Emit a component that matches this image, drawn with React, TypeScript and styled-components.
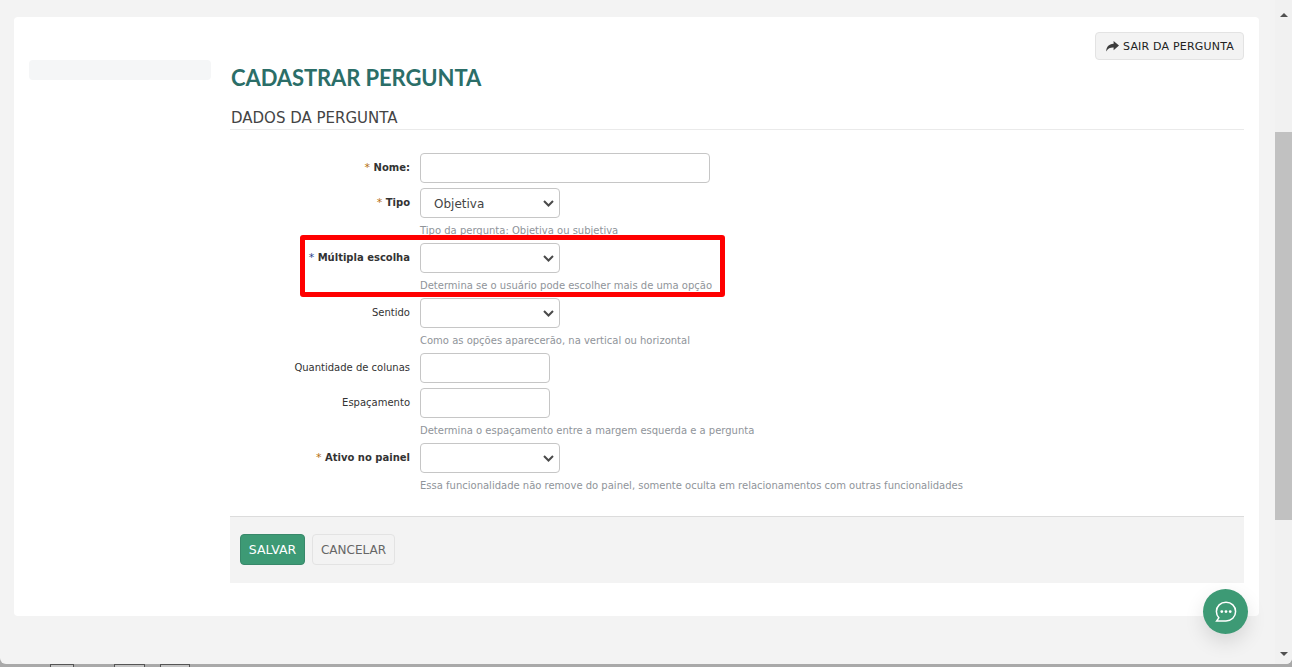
import React from 'react';
import styled, { createGlobalStyle } from 'styled-components';

const GlobalStyle = createGlobalStyle`
  html, body {
    margin: 0;
    height: 100%;
    overflow: hidden;
    background: #a9a9a9;
  }
  * {
    box-sizing: border-box;
  }
`;

type Field = {
  label: string;
  required?: 'orange' | 'blue';
  kind: 'text' | 'short' | 'select';
  value?: string;
  hint?: string;
};

const fields: Field[] = [
  { label: 'Nome:', required: 'orange', kind: 'text' },
  { label: 'Tipo', required: 'orange', kind: 'select', value: 'Objetiva', hint: 'Tipo da pergunta: Objetiva ou subjetiva' },
  { label: 'Múltipla escolha', required: 'blue', kind: 'select', hint: 'Determina se o usuário pode escolher mais de uma opção' },
  { label: 'Sentido', kind: 'select', hint: 'Como as opções aparecerão, na vertical ou horizontal' },
  { label: 'Quantidade de colunas', kind: 'short' },
  { label: 'Espaçamento', kind: 'short', hint: 'Determina o espaçamento entre a margem esquerda e a pergunta' },
  { label: 'Ativo no painel', required: 'orange', kind: 'select', hint: 'Essa funcionalidade não remove do painel, somente oculta em relacionamentos com outras funcionalidades' },
];

const tabs = [24, 31, 30];

const App: React.FC = () => {
  return (
    <Screen>
      <GlobalStyle />
      <Window>
        <Viewport>
          <Card>
            <Sidebar>
              <SidebarStub />
            </Sidebar>
            <Content>
              <TopBar>
                <ExitButton type="button">
                  <svg width="13" height="11" viewBox="0 0 13 11" fill="#3c3c3c">
                    <path d="M7.6 0 L13 4.6 L7.6 9.2 V6.4 C4.4 6.3 2 7 .3 10.4 C.2 6.2 2.6 3 7.6 2.8 Z" />
                  </svg>
                  SAIR DA PERGUNTA
                </ExitButton>
              </TopBar>
              <Title>CADASTRAR PERGUNTA</Title>
              <SectionTitle>DADOS DA PERGUNTA</SectionTitle>
              <Form>
                {fields.map((f) => (
                  <Row key={f.label} $hasHint={!!f.hint}>
                    <Label $bold={!!f.required}>
                      {f.required && <Star $color={f.required}>* </Star>}
                      {f.label}
                    </Label>
                    <Control>
                      {f.kind === 'select' ? (
                        <SelectBox>
                          {f.value}
                          <svg width="11" height="7" viewBox="0 0 11 7" fill="none" stroke="#4a4a4a" strokeWidth="2">
                            <path d="M1 1 L5.5 5.5 L10 1" />
                          </svg>
                        </SelectBox>
                      ) : (
                        <Input $wide={f.kind === 'text'} />
                      )}
                      {f.hint && <Hint>{f.hint}</Hint>}
                    </Control>
                  </Row>
                ))}
                <Highlight />
              </Form>
              <Footer>
                <SaveButton type="button">SALVAR</SaveButton>
                <CancelButton type="button">CANCELAR</CancelButton>
              </Footer>
            </Content>
          </Card>
          <ChatButton type="button">
            <svg width="22" height="22" viewBox="0 0 22 22" fill="none" stroke="#fff" strokeWidth="1.5">
              <path d="M11 1.2 C16.4 1.2 20.6 5.2 20.6 10.6 C20.6 16 16.4 20 11 20 H1.6 L3.8 16.8 C2.2 15 1.4 13 1.4 10.6 C1.4 5.2 5.6 1.2 11 1.2 Z" />
              <circle cx="6.8" cy="10.6" r="0.7" fill="#fff" />
              <circle cx="11" cy="10.6" r="0.7" fill="#fff" />
              <circle cx="15.2" cy="10.6" r="0.7" fill="#fff" />
            </svg>
          </ChatButton>
        </Viewport>
        <Scrollbar>
          <ArrowUp />
          <Track>
            <Thumb />
          </Track>
          <ArrowDown />
        </Scrollbar>
      </Window>
      <BackTabs>
        {tabs.map((w, i) => (
          <BackTab key={i} $width={w} />
        ))}
      </BackTabs>
    </Screen>
  );
};

export default App;

const Screen = styled.div`
  height: 667px;
  width: 1292px;
  overflow: hidden;
`;

const Window = styled.div`
  display: flex;
  height: 664px;
  background: #f3f3f3;
  border-radius: 0 0 6px 6px;
  overflow: hidden;
`;

const BackTabs = styled.div`
  display: flex;
  gap: 15px;
  height: 3px;
  padding-left: 50px;
`;

const BackTab = styled.div<{ $width: number }>`
  width: ${(p) => p.$width}px;
  height: 3px;
  background: #c4c4c4;
  border-top: 1px solid #555;
  border-left: 1px solid #555;
  border-right: 1px solid #555;
  &:nth-child(1) {
    margin-right: 25px;
  }
`;

const Viewport = styled.div`
  position: relative;
  flex: 1;
  padding: 17px 16px 0 14px;
`;

const Card = styled.div`
  display: flex;
  height: 599px;
  background: #fff;
  border-radius: 4px;
`;

const Sidebar = styled.div`
  width: 216px;
  padding: 43px 0 0 15px;
`;

const SidebarStub = styled.div`
  width: 182px;
  height: 20px;
  background: #f5f6f7;
  border-radius: 4px;
`;

const Content = styled.div`
  flex: 1;
  margin-right: 15px;
  padding-top: 15px;
`;

const TopBar = styled.div`
  display: flex;
  justify-content: flex-end;
`;

const ExitButton = styled.button`
  display: flex;
  align-items: center;
  gap: 4px;
  height: 28px;
  width: 149px;
  padding: 0 0 0 10px;
  background: #f3f3f3;
  border: 1px solid #e3e3e3;
  border-radius: 4px;
  font: 11px 'DejaVu Sans', Verdana, sans-serif;
  letter-spacing: 0.2px;
  color: #222;
`;

const Title = styled.h1`
  margin: 3px 0 0 1px;
  font: 700 22px/30px Lato, sans-serif;
  letter-spacing: -0.1px;
  color: #2b6e68;
`;

const SectionTitle = styled.h2`
  margin: 14px 0 0;
  padding: 0 0 0 1px;
  height: 23px;
  font: 400 15px/22px 'DejaVu Sans', Verdana, sans-serif;
  color: #444;
  border-bottom: 1px solid #eaeaea;
`;

const Form = styled.div`
  position: relative;
  padding-top: 23px;
  height: 386px;
`;

const Row = styled.div<{ $hasHint: boolean }>`
  display: flex;
  margin-bottom: ${(p) => (p.$hasHint ? '0' : '5px')};
`;

const Label = styled.div<{ $bold: boolean }>`
  width: 190px;
  height: 30px;
  padding-right: 10px;
  text-align: right;
  font: ${(p) => (p.$bold ? 700 : 400)} 10px/30px 'DejaVu Sans', Verdana, sans-serif;
  color: #333;
`;

const Star = styled.span<{ $color: 'orange' | 'blue' }>`
  font-weight: 400;
  font-size: 11px;
  color: ${(p) => (p.$color === 'blue' ? '#2b3f8c' : '#b5700f')};
`;

const Control = styled.div`
  display: flex;
  flex-direction: column;
`;

const SelectBox = styled.div`
  display: flex;
  align-items: center;
  width: 140px;
  height: 30px;
  padding: 2px 5px 0 13px;
  background: #fff;
  border: 1px solid #c6c6c6;
  border-radius: 4px;
  font: 12px 'DejaVu Sans', Verdana, sans-serif;
  color: #444;
  svg {
    margin: -2px 0 0 auto;
  }
`;

const Input = styled.div<{ $wide: boolean }>`
  width: ${(p) => (p.$wide ? '290px' : '130px')};
  height: 30px;
  background: #fff;
  border: 1px solid #c6c6c6;
  border-radius: 4px;
`;

const Hint = styled.div`
  height: 25px;
  padding-top: 6px;
  font: 10px/13px 'DejaVu Sans', Verdana, sans-serif;
  color: #8f949a;
  white-space: nowrap;
`;

const Highlight = styled.div`
  position: absolute;
  left: 70px;
  top: 105px;
  width: 425px;
  height: 62px;
  border: 5px solid #f00;
  border-radius: 3px;
`;

const Footer = styled.div`
  display: flex;
  align-items: flex-start;
  gap: 7px;
  height: 67px;
  padding: 17px 0 0 10px;
  background: #f3f3f3;
  border-top: 1px solid #dcdcdc;
`;

const SaveButton = styled.button`
  width: 65px;
  height: 31px;
  padding: 0;
  background: #3d9a75;
  border: 1px solid #38886a;
  border-radius: 4px;
  font: 12.5px 'DejaVu Sans', Verdana, sans-serif;
  color: #fff;
`;

const CancelButton = styled.button`
  width: 83px;
  height: 31px;
  padding: 0;
  background: #f3f3f3;
  border: 1px solid #e3e3e3;
  border-radius: 4px;
  font: 12px 'DejaVu Sans', Verdana, sans-serif;
  color: #666;
`;

const ChatButton = styled.button`
  position: absolute;
  left: 1203px;
  top: 589px;
  display: flex;
  align-items: center;
  justify-content: center;
  width: 45px;
  height: 45px;
  padding: 0;
  border: none;
  border-radius: 50%;
  background: #3d9a75;
  box-shadow: 0 8px 20px rgba(0, 0, 0, 0.12);
`;

const Scrollbar = styled.div`
  display: flex;
  flex-direction: column;
  align-items: center;
  width: 17px;
  background: #f1f1f1;
`;

const Track = styled.div`
  flex: 1;
  width: 100%;
`;

const Thumb = styled.div`
  width: 100%;
  height: 388px;
  margin-top: 115px;
  background: #c1c1c1;
`;

const ArrowUp = styled.div`
  margin-top: 5px;
  height: 12px;
  width: 0;
  border-left: 4px solid transparent;
  border-right: 4px solid transparent;
  border-bottom: 4px solid #505050;
`;

const ArrowDown = styled.div`
  height: 12px;
  width: 0;
  border-left: 4px solid transparent;
  border-right: 4px solid transparent;
  border-top: 4px solid #505050;
`;
